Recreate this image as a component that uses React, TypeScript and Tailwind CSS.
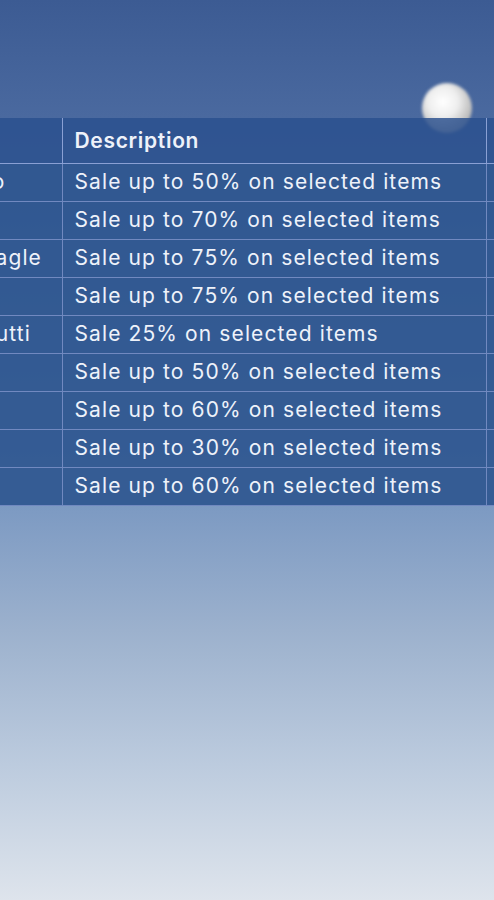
const rows = [
  { brand: "Marc O'Polo", sale: "Sale up to 50% on selected items", until: "31 March" },
  { brand: "Adidas", sale: "Sale up to 70% on selected items", until: "15 April" },
  { brand: "American Eagle", sale: "Sale up to 75% on selected items", until: "30 April" },
  { brand: "Levi's", sale: "Sale up to 75% on selected items", until: "30 April" },
  { brand: "Tutti and Frutti", sale: "Sale 25% on selected items", until: "10 May" },
  { brand: "Guess", sale: "Sale up to 50% on selected items", until: "31 May" },
  { brand: "Mango", sale: "Sale up to 60% on selected items", until: "31 May" },
  { brand: "Zara", sale: "Sale up to 30% on selected items", until: "15 June" },
  { brand: "Diesel", sale: "Sale up to 60% on selected items", until: "30 June" },
];

export default function App() {
  return (
    <div
      className="relative min-h-screen overflow-hidden bg-[linear-gradient(180deg,#3c5b93_0%,#4a699f_13%,#7e9bc3_57%,#9cb1cd_70%,#bccbde_85%,#dee4ec_100%)] text-[#eef2fa]"
      style={{ fontFamily: "Inter, 'Noto Sans', sans-serif" }}
    >
      <div className="h-[118px]" />

      {/* decorative ball sitting behind the table */}
      <div className="absolute left-[422px] top-[83px] h-[50px] w-[50px] rounded-full bg-[radial-gradient(circle_at_42%_38%,#ffffff_0%,#eeeeee_35%,#b9b9b9_70%,#7d8190_100%)] blur-[1.5px]" />

      <div className="relative overflow-hidden">
        <table className="ml-[-141px] w-[880px] table-fixed border-collapse text-left text-[21px] tracking-[0.053em] whitespace-nowrap">
          <colgroup>
            <col className="w-[203px]" />
            <col className="w-[424px]" />
            <col className="w-[253px]" />
          </colgroup>
          <thead>
            <tr className="bg-[#2a4f8e]/[0.82]">
              <th className="h-[45px] border-r border-b border-[#8aa0d4] px-3 font-semibold tracking-[0.033em]">Brand</th>
              <th className="h-[45px] border-x border-b border-[#8aa0d4] px-3 font-semibold tracking-[0.033em]">Description</th>
              <th className="h-[45px] border-l border-b border-[#8aa0d4] px-3 font-semibold tracking-[0.033em]">Valid until</th>
            </tr>
          </thead>
          <tbody>
            {rows.map((r) => (
              <tr key={r.sale + r.brand} className="bg-[#2e558f]/[0.9]">
                <td className="h-[38px] overflow-hidden border-r border-b border-[#7189c0] px-3 font-normal">{r.brand}</td>
                <td className="h-[38px] border-x border-b border-[#7189c0] px-3 font-normal">{r.sale}</td>
                <td className="h-[38px] border-l border-b border-[#7189c0] px-3 font-normal">{r.until}</td>
              </tr>
            ))}
          </tbody>
        </table>
      </div>
    </div>
  );
}
